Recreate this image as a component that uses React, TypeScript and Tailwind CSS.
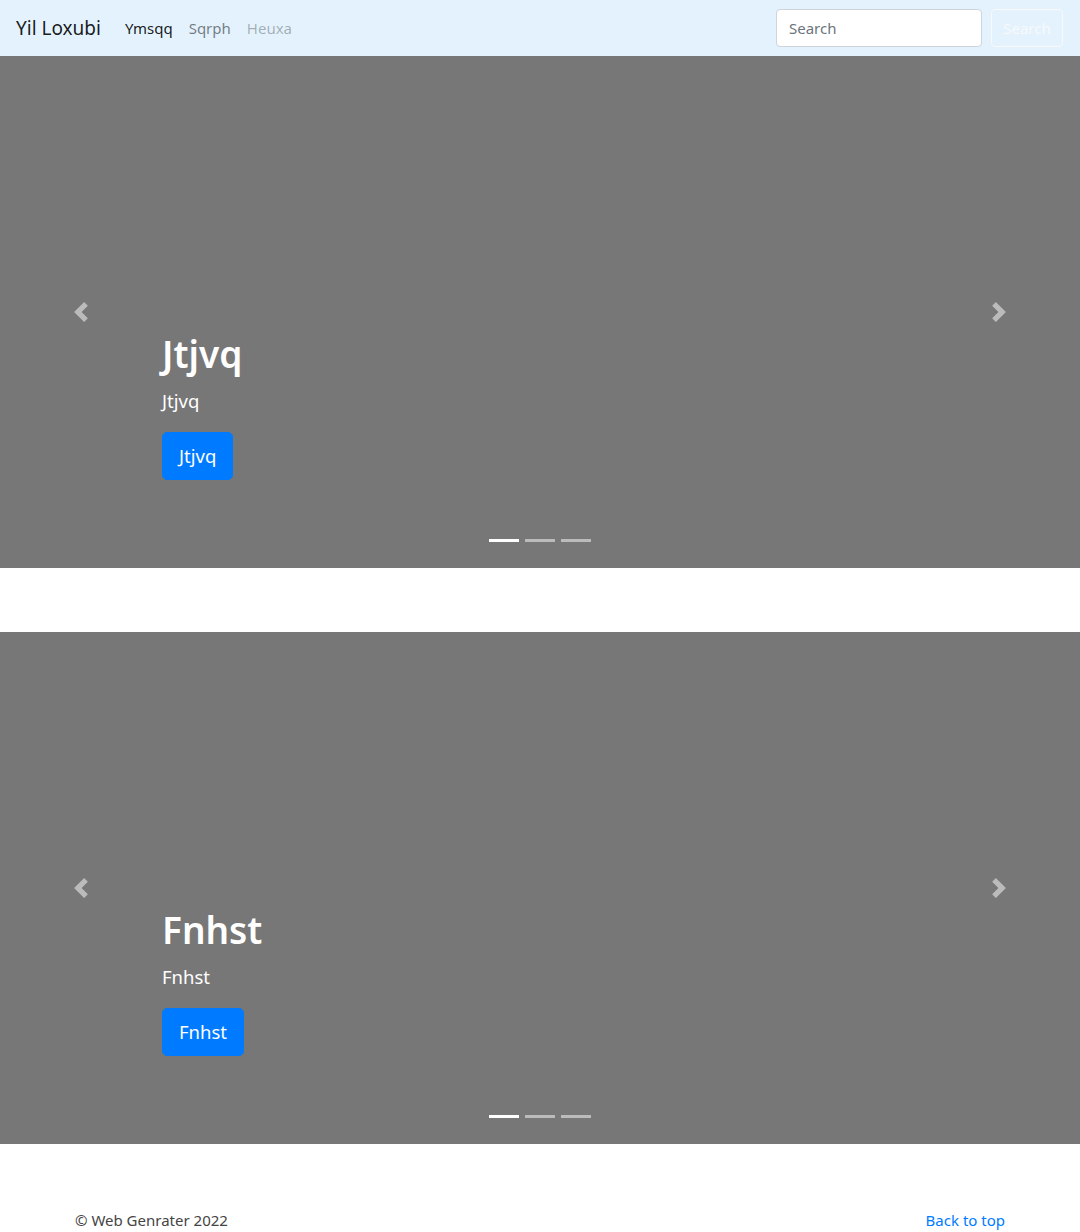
import React from "react";

const FONT = { fontFamily: '"Noto Sans", "Open Sans", sans-serif' };

function Prev() {
  return (
    <svg width="20" height="20" viewBox="0 0 8 8" fill="#fff">
      <path d="M5.25 0l-4 4 4 4 1.5-1.5L4.25 4l2.5-2.5L5.25 0z" />
    </svg>
  );
}
function Next() {
  return (
    <svg width="20" height="20" viewBox="0 0 8 8" fill="#fff">
      <path d="M2.75 0l-1.5 1.5L3.75 4l-2.5 2.5L2.75 8l4-4-4-4z" />
    </svg>
  );
}

function Carousel({ label }: { label: string }) {
  return (
    <div className="relative h-[512px] bg-[#777777] overflow-hidden">
      <div className="absolute left-0 top-0 bottom-0 w-[15%] flex items-center justify-center opacity-50">
        <Prev />
      </div>
      <div className="absolute right-0 top-0 bottom-0 w-[15%] flex items-center justify-center opacity-50">
        <Next />
      </div>
      <div className="absolute left-[15%] right-[15%] bottom-[52px] py-5 text-left text-white">
        <h1 className="text-[37px] leading-[48px] font-semibold mb-2">{label}</h1>
        <p className="text-[18.5px] leading-[30px] mb-4">{label}</p>
        <div className="mb-4 flex">
          <span className="inline-block bg-[#007bff] border border-[#007bff] rounded-[5px] px-4 py-2 text-[18.5px] leading-[30px] text-white">
            {label}
          </span>
        </div>
      </div>
      <div className="absolute left-0 right-0 bottom-[26px] flex justify-center">
        <span className="w-[30px] h-[3px] mx-[3px] bg-white" />
        <span className="w-[30px] h-[3px] mx-[3px] bg-white opacity-50" />
        <span className="w-[30px] h-[3px] mx-[3px] bg-white opacity-50" />
      </div>
    </div>
  );
}

export default function App() {
  return (
    <div style={FONT} className="bg-white text-[#212529] text-[15px] leading-[24px]">
      <nav className="h-14 bg-[#e3f2fd] pl-4 pr-[17px] flex items-center">
        <span className="text-[19px] leading-[30px] text-black/90 mr-4">Yil Loxubi</span>
        <span className="px-2 text-black/90">Ymsqq</span>
        <span className="px-2 text-black/50">Sqrph</span>
        <span className="px-2 text-black/30">Heuxa</span>
        <div className="ml-auto flex items-center">
          <div className="w-[206px] h-[38px] bg-white border border-[#ced4da] rounded-[4px] px-3 flex items-center text-[#6c757d]">
            Search
          </div>
          <div className="ml-[9px] h-[38px] w-[72px] border border-[#f8f9fa] rounded-[4px] flex items-center justify-center text-[#f8f9fa]">
            Search
          </div>
        </div>
      </nav>
      <Carousel label="Jtjvq" />
      <div className="h-16" />
      <Carousel label="Fnhst" />
      <footer className="mt-16 max-w-[960px] mx-auto px-[15px] flex justify-between text-[#444]">
        <p>© Web Genrater 2022</p>
        <p className="text-[#007bff]">Back to top</p>
      </footer>
      <div className="h-4" />
    </div>
  );
}
